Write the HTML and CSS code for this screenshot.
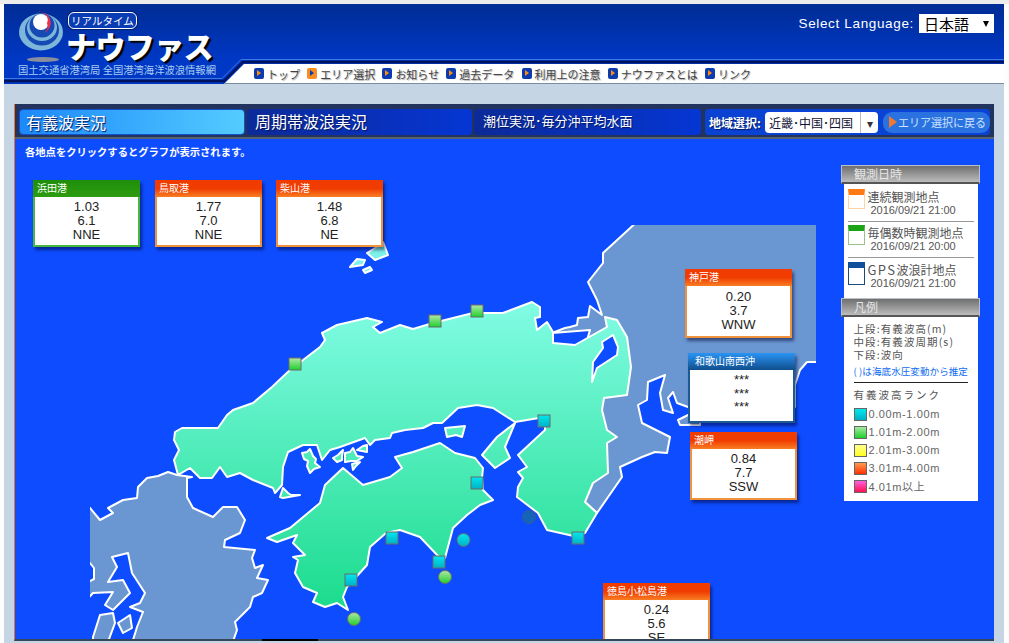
FILE: index.html
```html
<!DOCTYPE html>
<html lang="ja">
<head>
<meta charset="utf-8">
<title>ナウファス</title>
<link rel="stylesheet" href="styles.css">
</head>
<body>
<div class="page">
  <header class="header">
    <svg class="hdr-lines" width="1000" height="80" viewBox="4 4 1000 80">
      <polyline points="4,78.5 222,78.5 241,59.5 1004,59.5" fill="none" stroke="#3f7ae0" stroke-width="1"/>
      <polyline points="4,81 224,81 243,62 1004,62" fill="none" stroke="#00135c" stroke-width="2.4"/>
    </svg>
    <div class="brand-row">
      <div class="brand">
        <svg class="logo" width="48" height="58" viewBox="17 10 48 58">
          <ellipse cx="41" cy="32" rx="22" ry="18.500" fill="#7db6d8"/>
          <ellipse cx="42" cy="30" rx="17" ry="15.500" fill="#1549b4"/>
          <ellipse cx="42" cy="27.500" rx="15" ry="13.500" fill="#7db6d8"/>
          <ellipse cx="42" cy="25.500" rx="12.500" ry="12" fill="#1549b4"/>
          <circle cx="41" cy="22" r="8" fill="#fff"/>
          <path d="M38 12a11 11 0 0 1 6 21a9 9 0 0 0 3-10a8 8 0 0 0-9-11z" fill="#f0304c"/>
          <ellipse cx="43" cy="59.500" rx="16" ry="2.500" fill="#8a8f9e"/>
        </svg>
        <div class="brand-text">
          <span class="pill">リアルタイム</span>
          <span class="brand-name">ナウファス</span>
        </div>
        <div class="brand-sub">国土交通省港湾局 全国港湾海洋波浪情報網</div>
      </div>
      <div class="lang">
        <span class="lang-label">Select Language:</span>
        <div class="lang-select"><span>日本語</span><i class="lang-arrow"></i></div>
      </div>
    </div>
    <nav class="nav">
      <a class="nav-item"><i class="ico"></i>トップ</a>
      <a class="nav-item"><i class="ico ico-on"></i>エリア選択</a>
      <a class="nav-item"><i class="ico"></i>お知らせ</a>
      <a class="nav-item"><i class="ico"></i>過去データ</a>
      <a class="nav-item"><i class="ico"></i>利用上の注意</a>
      <a class="nav-item"><i class="ico"></i>ナウファスとは</a>
      <a class="nav-item"><i class="ico"></i>リンク</a>
    </nav>
  </header>

  <main class="panel">
    <div class="tabs">
      <div class="tab tab-on">有義波実況</div>
      <div class="tab tab-b">周期帯波浪実況</div>
      <div class="tab tab-c">潮位実況･毎分沖平均水面</div>
      <div class="area">
        <b class="area-label">地域選択:</b>
        <div class="area-select"><span>近畿･中国･四国</span><i>▾</i></div>
        <div class="back"><i class="back-tri"></i>エリア選択に戻る</div>
      </div>
    </div>

    <div class="map">
      <svg class="map-svg" width="979" height="502" viewBox="15 139 979 502">
        <defs>
          <linearGradient id="land" gradientUnits="userSpaceOnUse" x1="0" y1="310" x2="0" y2="605">
            <stop offset="0" stop-color="#7ffbe2"/>
            <stop offset="1" stop-color="#1cdc8e"/>
          </linearGradient>
          <linearGradient id="mg" x1="0" y1="0" x2="0" y2="1"><stop offset="0" stop-color="#b0e8a8"/><stop offset="1" stop-color="#1fd02c"/></linearGradient>
          <linearGradient id="mc" x1="0" y1="0" x2="0" y2="1"><stop offset="0" stop-color="#00e8ec"/><stop offset="1" stop-color="#00b0c8"/></linearGradient>
          <clipPath id="mapclip"><rect x="90" y="225" width="726" height="420"/></clipPath>
        </defs>
        <g class="grey" clip-path="url(#mapclip)">
          <polygon points="640,219 825,219 825,361 816,362 807,362 800,370 795,385 795,407 688,407 677,403 673,392 668,398 673,413 663,410 660,393 665,375 648,382 647,400 638,405 642,423 670,437 667,453 655,452 642,457 620,467 622,477 597,513 585,502 570,400 590,330 552,333 565,328 570,327 577,325 578,318 588,317 590,306 602,315 597,300 588,282 603,263 603,253"/>
          <polygon points="678,420 688,415 700,415 700,425 680,425"/>
          <polygon points="84,505 90,508 100,520 113,513 108,508 123,500 137,498 138,487 147,478 158,476 168,472 177,475 192,477 187,478 187,497 193,508 213,517 223,507 237,507 245,520 240,533 225,540 224,547 255,550 252,558 255,568 263,565 257,578 268,580 262,593 253,597 250,607 235,622 237,630 230,650 84,650"/>
          <polygon class="sea" points="112,557 128,553 132,573 145,593 140,603 130,607 143,612 137,627 130,650 84,650 84,603 93,593 113,592 105,605 113,610 130,593 123,580 108,582 117,567"/>
          <polygon class="sea" points="84,563 90,563 94,568 94,579 90,581 84,583"/>
          <polygon points="93,637 100,615 113,613 115,623 105,650 93,650"/>
          <polygon points="118,623 130,615 132,628 123,633"/>
        </g>
        <g class="land">
          <polygon points="175,432 182,428 218,428 227,415 233,410 253,403 272,387 290,370 320,347 325,340 322,333 337,325 367,318 382,322 373,327 380,333 400,325 413,329 433,323 473,313 503,313 532,302 540,307 540,317 535,318 537,330 547,322 553,332 553,343 575,345 607,327 605,317 617,320 627,337 631,367 627,395 604,398 602,410 607,430 617,437 607,443 608,473 593,483 585,502 597,513 585,533 578,537 547,530 538,513 517,497 518,487 523,478 518,472 527,467 518,455 545,430 545,417 515,422 493,408 477,405 458,408 442,423 433,423 423,428 405,430 392,433 390,438 375,440 370,445 365,438 340,447 330,450 322,460 317,445 303,445 288,452 283,467 282,485 275,493 273,488 253,480 240,473 227,477 220,467 212,478 200,478 190,468 178,475 174,460 179,450 174,440"/>
          <polygon points="267,538 290,528 320,503 325,485 343,468 363,485 390,477 402,468 395,457 413,452 440,443 455,453 475,458 483,468 482,478 483,490 493,500 480,505 467,515 453,528 445,558 440,558 420,537 400,530 386,533 370,547 367,565 347,587 343,597 348,610 337,603 325,607 313,602 317,593 303,587 295,573 298,560 293,557 305,555 293,543 297,535 277,542"/>
          <polygon points="515,423 497,437 482,455 495,468 510,458 505,447"/>
          <polygon points="445,428 465,426 462,437 456,435 447,437"/>
          <polygon points="302,453 307,452 310,449 313,456 316,459 315,463 320,467 314,469 310,473 307,466 308,461 304,459"/>
          <polygon points="333,458 338,455 343,450 342,456 342,460 337,462"/>
          <polygon points="345,453 350,452 353,448 357,456 363,457 357,461 351,461 345,462"/>
          <polygon points="357,450 363,446 367,445 367,452 362,451"/>
          <polygon points="352,464 360,462 356,466 353,470"/>
          <polygon points="280,497 283,488 288,493 291,495 300,495 283,498"/>
          <polygon class="pale" points="383,242 388,255 375,260 367,253 375,248"/>
          <polygon class="pale" points="350,267 357,259 365,260 363,265"/>
          <polygon class="pale" points="363,270 370,267 372,270 365,273"/>
        </g>
        <polygon class="lake" points="613,335 602,342 603,348 593,362 592,382 597,368 617,355 618,347"/>
        <g class="mk mk-g">
          <rect x="289" y="358" width="12" height="12"/><rect x="429" y="315" width="12" height="12"/><rect x="471" y="305" width="12" height="12"/>
          <circle cx="445" cy="577" r="6.500"/><circle cx="354" cy="619" r="6.500"/>
        </g>
        <g class="mk mk-c">
          <rect x="386" y="532" width="12" height="12"/><rect x="345" y="574" width="12" height="12"/><rect x="433" y="556" width="12" height="12"/><rect x="471" y="477" width="12" height="12"/><rect x="538" y="415" width="12" height="12"/><rect x="572" y="532" width="12" height="12"/>
          <circle cx="463.500" cy="540" r="6.500"/>
        </g>
        <circle class="mk-d" cx="529" cy="517" r="6.500"/>
      </svg>

      <p class="hint">各地点をクリックするとグラフが表示されます。</p>

      <div class="card card-green c-hamada"><div class="card-head">浜田港</div><div class="card-body">1.03<br>6.1<br>NNE</div></div>
      <div class="card c-tottori"><div class="card-head">鳥取港</div><div class="card-body">1.77<br>7.0<br>NNE</div></div>
      <div class="card c-shibayama"><div class="card-head">柴山港</div><div class="card-body">1.48<br>6.8<br>NE</div></div>
      <div class="card c-kobe"><div class="card-head">神戸港</div><div class="card-body">0.20<br>3.7<br>WNW</div></div>
      <div class="card card-blue c-waka"><div class="card-head">和歌山南西沖</div><div class="card-body">***<br>***<br>***</div></div>
      <div class="card c-shio"><div class="card-head">潮岬</div><div class="card-body">0.84<br>7.7<br>SSW</div></div>
      <div class="card c-komatsu"><div class="card-head">徳島小松島港</div><div class="card-body">0.24<br>5.6<br>SE</div></div>

      <aside class="side">
        <div class="side-head">観測日時</div>
        <div class="side-box obs">
          <div class="obs-row"><i class="obs-ico oi-o"></i><div class="obs-txt"><div class="obs-name">連続観測地点</div><div class="obs-date">2016/09/21 21:00</div></div></div>
          <div class="obs-row"><i class="obs-ico oi-g"></i><div class="obs-txt"><div class="obs-name">毎偶数時観測地点</div><div class="obs-date">2016/09/21 20:00</div></div></div>
          <div class="obs-row"><i class="obs-ico oi-b"></i><div class="obs-txt"><div class="obs-name"><span class="gps">GPS</span>波浪計地点</div><div class="obs-date">2016/09/21 21:00</div></div></div>
        </div>
        <div class="side-head">凡例</div>
        <div class="side-box legend">
          <div class="lg-line">上段:有義波高(m)</div>
          <div class="lg-line">中段:有義波周期(s)</div>
          <div class="lg-line">下段:波向</div>
          <div class="lg-note">( )は海底水圧変動から推定</div>
          <div class="lg-title">有義波高ランク</div>
          <div class="rank"><i class="sw sw1"></i>0.00m-1.00m</div>
          <div class="rank"><i class="sw sw2"></i>1.01m-2.00m</div>
          <div class="rank"><i class="sw sw3"></i>2.01m-3.00m</div>
          <div class="rank"><i class="sw sw4"></i>3.01m-4.00m</div>
          <div class="rank"><i class="sw sw5"></i>4.01m以上</div>
        </div>
      </aside>
    </div>
  </main>
</div>
</body>
</html>
```
FILE: styles.css
```css
* { box-sizing: border-box; }
html, body { margin: 0; height: 100%; overflow: hidden; background: #fdfdfd; }
body {
  border-top: 4px solid #ececec;
  font-family: "Liberation Sans", "Noto Sans CJK JP", sans-serif;
}
i { font-style: normal; }
.page { margin-left: 4px; width: 1000px; height: 639px; background: #c5d5e3; overflow: hidden; }

/* header */
.header { position: relative; height: 80px; background: linear-gradient(#002c94, #0038c6 70%); }
.hdr-lines { position: absolute; left: 0; top: 0; z-index: 2; }
.brand-row { display: flex; justify-content: space-between; height: 58px; }
.brand { position: relative; width: 230px; height: 76px; }
.logo { position: absolute; left: 13px; top: 6px; }
.brand-text { position: absolute; left: 64px; top: 8px; display: flex; flex-direction: column; align-items: flex-start; }
.pill {
  font-size: 10.500px; line-height: 15px; color: #fff; padding: 0 2px;
  border: 1px solid #fff; border-radius: 6px; background: #0a3cb4;
  font-family: "Noto Sans CJK JP", sans-serif; box-shadow: 0 0 0 1px #00206c;
}
.brand-name {
  font-family: "Noto Sans CJK JP", sans-serif; font-weight: 900; font-size: 30px; line-height: 27px;
  color: #fff; margin: 3px 0 0 -2px; letter-spacing: -.6px; text-shadow: 2px 2px 1px #000;
}
.brand-sub {
  position: absolute; left: 14px; top: 60px; white-space: nowrap;
  font-family: "Noto Sans CJK JP", sans-serif; font-size: 10.300px; line-height: 12px; color: #a8cdf0;
}
.lang { display: flex; align-items: flex-start; gap: 5px; padding: 10px 10px 0 0; }
.lang-label { font-size: 13.500px; line-height: 20px; letter-spacing: .65px; color: #fff; }
.lang-select {
  width: 75px; height: 19px; background: #fff; color: #000; display: flex; justify-content: space-between; align-items: center;
  padding: 0 5px; font-family: "Noto Sans CJK JP", sans-serif; font-size: 15px;
}
.lang-arrow { display: block; border-style: solid; border-width: 6px 3.500px 0; border-color: #000 transparent transparent; }
.nav {
  position: absolute; left: 220px; right: 0; top: 60px; height: 20px; display: flex; align-items: center; gap: 7.200px;
  padding: 0 0 0 30px; background: #fff; border-bottom: 1px solid #7c8ba4;
  clip-path: polygon(20px 0, 100% 0, 100% 100%, 0 100%);
}
.nav-item {
  display: flex; align-items: center; gap: 3px; font-family: "Noto Sans CJK JP", sans-serif; font-size: 11px; line-height: 16px;
  color: #444; text-shadow: 1px 1px 1px #aaa; white-space: nowrap;
}
.ico { position: relative; display: block; width: 10px; height: 11px; border-radius: 2px; background: #0a3cb0; }
.ico::after {
  content: ""; position: absolute; left: 3px; top: 2px; border-style: solid; border-width: 3.500px 0 3.500px 4.500px;
  border-color: transparent transparent transparent #ff8c10;
}
.ico-on { background: #f88c20; }
.ico-on::after { border-left-color: #0a3cb0; }

/* panel */
.panel { position: relative; margin: 20px 10px 0; height: 537px; background: #0e4dff; display: flex; flex-direction: column; border-bottom: 2px solid #37475a; border-left: 1px solid #e8742a; }
.panel::after { content: ""; position: absolute; left: 247px; bottom: -2px; width: 56px; height: 2px; background: #000; }
.tabs { display: flex; gap: 2px; height: 35px; padding: 5px 4px 4px 4px; background: #22345e; border-bottom: 2px solid #59626f; }
.tab {
  height: 26px; width: 226px; border-radius: 4px; color: #fff; font-family: "Noto Sans CJK JP", sans-serif; font-size: 16px; line-height: 24px;
  padding-left: 8px; background: linear-gradient(90deg, #0c2a98, #0536d4); text-shadow: 1px 1px 1px #00165c;
}
.tab-on { width: 227px; padding-left: 6px; background: linear-gradient(90deg, #1c88fa, #54ccff); border: 1px solid #1150c8; }
.tab-c { width: 228px; font-size: 13px; padding-left: 9px; }
.area {
  margin-left: 2px; flex: 1; height: 26px; border-radius: 4px; background: #0a42d4; display: flex; align-items: center; gap: 2px; padding-left: 4px;
  color: #fff;
}
.area-label { font-family: "Noto Sans CJK JP", sans-serif; font-size: 12px; white-space: nowrap; width: 54px; text-shadow: 1px 1px 1px #00165c; }
.area-select {
  width: 113px; height: 21px; background: #fff; border-radius: 4px; color: #113; display: flex; justify-content: space-between; align-items: center;
  font-family: "Noto Sans CJK JP", sans-serif; font-size: 12px; padding-left: 4px; white-space: nowrap;
}
.area-select i { display: block; width: 18px; text-align: center; border-left: 1px solid #bbb; line-height: 21px; color: #333; font-size: 12px; }
.back {
  margin-left: 3px; width: 107px; height: 21px; border-radius: 9px; background: #2a72e0; color: #cfe2ff; display: flex; align-items: center; gap: 1px;
  padding-left: 6px; font-family: "Noto Sans CJK JP", sans-serif; font-size: 11px; white-space: nowrap;
}
.back-tri { display: block; border-style: solid; border-width: 6px 0 6px 8px; border-color: transparent transparent transparent #f07830; }

/* map */
.map { position: relative; flex: 1; overflow: hidden; }
.map-svg { position: absolute; left: 0; top: 0; }
.grey polygon { fill: #6a97d2; stroke: #fff; stroke-width: 2; stroke-linejoin: round; }
.grey .sea { fill: #0e4dff; }
.land polygon { fill: url(#land); stroke: #fff; stroke-width: 2; stroke-linejoin: round; }
.land .pale { fill: #7df0ea; }
.lake { fill: #0e4dff; stroke: #fff; stroke-width: 2; stroke-linejoin: round; }
.mk rect, .mk circle { stroke: #6a6a6a; stroke-width: 1; }
.mk-g rect, .mk-g circle { fill: url(#mg); }
.mk-c rect, .mk-c circle { fill: url(#mc); }
.mk-d { fill: #1464b8; stroke: #3a5a9a; }
.hint {
  position: absolute; left: 10px; top: 6px; margin: 0; color: #fff; font-family: "Noto Sans CJK JP", sans-serif;
  font-weight: 700; font-size: 10.300px; line-height: 14px; white-space: nowrap;
}

.card {
  position: absolute; width: 107px; border: 2px solid #f0913c; border-top: 0; background: #fff;
  box-shadow: 2px 3px 3px rgba(0, 0, 50, .5);
}
.card-head {
  margin: 0 -2px; height: 17px; padding-left: 4px; color: #fff; font-family: "Noto Sans CJK JP", sans-serif; font-size: 10px; line-height: 16px;
  background: linear-gradient(#f03c00 50%, #f87e24);
}
.card-body { height: 48px; padding-top: 3px; text-align: center; font-size: 13px; line-height: 14px; color: #222; }
.card-green { border-color: #46b83c; }
.card-green .card-head { background: linear-gradient(#1f8f0c, #2d9c10); }
.card-blue { border-color: #1c5a94; }
.card-blue .card-head { background: linear-gradient(#2a94f4, #0f4e8c); padding-left: 7px; }
.c-hamada { left: 18px; top: 41px; }
.c-tottori { left: 140px; top: 41px; }
.c-shibayama { left: 261px; top: 41px; }
.c-kobe { left: 670px; top: 130px; }
.c-kobe .card-body { height: 50px; padding-top: 4px; }
.c-waka { left: 673px; top: 214px; }
.c-waka .card-body { height: 51px; line-height: 13.500px; }
.c-shio { left: 675px; top: 293px; }
.c-shio .card-body { height: 49px; padding-top: 3px; }
.c-komatsu { left: 588px; top: 444px; }

.side { position: absolute; left: 826px; top: 26px; width: 139px; display: flex; flex-direction: column; align-items: center; }
.side-head {
  width: 139px; height: 19px; padding-left: 12px; border: 1px solid #b9c0c8; border-bottom: 2px solid #555;
  background: linear-gradient(#6f6f6f, #bcbcbc); color: #e6e6e6; font-family: "Noto Sans CJK JP", sans-serif; font-size: 12px; line-height: 16px;
}
.side-box { width: 134px; background: #fff; color: #555; font-family: "Noto Sans CJK JP", sans-serif; }
.obs { height: 114px; padding: 2px 4px 0 4px; }
.obs-row { display: flex; gap: 3px; height: 36px; padding-top: 3px; border-bottom: 1px solid #999; }
.obs-row:last-child { border-bottom: 0; padding-top: 4px; }
.obs-ico { display: block; width: 17px; height: 20px; border: 1px solid; border-top-width: 6px; background: #fff; }
.oi-o { border-color: #ffd2a8; border-top-color: #ff7a14; }
.oi-g { border-color: #9cc090; border-top-color: #1ba414; }
.oi-b { border-color: #1c4a80; border-top-color: #104f9c; height: 23px; }
.obs-name { font-size: 12px; line-height: 15px; white-space: nowrap; }
.gps { font-size: 13px; letter-spacing: 1.400px; }
.obs-date { font-family: "Liberation Sans", sans-serif; font-size: 11px; line-height: 13px; letter-spacing: -.03px; padding-left: 3px; white-space: nowrap; }
.legend { height: 184px; padding: 5px 0 0 10px; }
.lg-line { font-size: 10.500px; line-height: 13px; white-space: nowrap; letter-spacing: 1.100px; }
.lg-note { font-size: 9.500px; line-height: 14px; color: #0f6cf0; margin: 3px 0 0 0; white-space: nowrap; padding-bottom: 4px; border-bottom: 1px solid #222; width: 114px; letter-spacing: .1px; }
.lg-title { font-size: 10.500px; letter-spacing: 2px; line-height: 14px; margin-top: 5px; margin-bottom: 3px; }
.rank { display: flex; align-items: center; gap: 2px; height: 18px; font-family: "Liberation Sans", "Noto Sans CJK JP", sans-serif; font-size: 11px; letter-spacing: .6px; color: #666; white-space: nowrap; }
.sw { display: block; width: 13px; height: 13px; border: 1px solid #666; }
.sw1 { background: linear-gradient(#00e8ec, #00b0c8); }
.sw2 { background: linear-gradient(#a8e8a0, #1fd02c); }
.sw3 { background: linear-gradient(#ffff90, #ffff20); }
.sw4 { background: linear-gradient(#ff9a50, #ff3000); }
.sw5 { background: linear-gradient(#ff60e0, #ff1050); }
```
